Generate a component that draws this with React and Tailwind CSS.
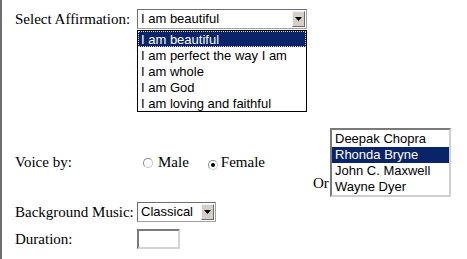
import React from "react";

const affirmations = [
  "I am beautiful",
  "I am perfect the way I am",
  "I am whole",
  "I am God",
  "I am loving and faithful",
];

const voices = ["Deepak Chopra", "Rhonda Bryne", "John C. Maxwell", "Wayne Dyer"];

// classic gray drop button with black arrow
const DropButton = () => (
  <div className="w-[13px] h-[16px] mr-[1px] flex items-center justify-center bg-[#d4d0c8] border border-t-[#f4f4f4] border-l-[#f4f4f4] border-b-[#6b6b6b] border-r-[#6b6b6b]">
    <svg width="7" height="4" viewBox="0 0 7 4">
      <path d="M0 0h7L3.5 4z" fill="#000" />
    </svg>
  </div>
);

const Select = ({ value, className }) => (
  <div
    className={`flex items-center h-[20px] bg-white border border-t-[#6f6f6f] border-l-[#6f6f6f] border-r-[#a0a0a0] border-b-[#a0a0a0] font-['Liberation_Sans',Arial,sans-serif] text-[13px] ${className}`}
  >
    <span className="flex-1 pl-[3px] leading-[16px] whitespace-nowrap">{value}</span>
    <DropButton />
  </div>
);

const Radio = ({ checked }) => (
  <span className="inline-flex items-center justify-center w-[10px] h-[10px] rounded-full border border-t-[#8a8a8a] border-l-[#8a8a8a] border-r-[#c8c8c8] border-b-[#c8c8c8] bg-white">
    {checked && <span className="w-[4px] h-[4px] rounded-full bg-black" />}
  </span>
);

export default function App() {
  return (
    <div className="w-[467px] h-[259px] overflow-hidden bg-white border-l-2 border-[#6e6e6e] pl-[13px] font-['Liberation_Serif','Times_New_Roman',serif] text-[15px] text-black">
      {/* Affirmation */}
      <div className="flex items-center h-[20px] mt-[9px]">
        <span className="w-[122px] whitespace-nowrap">Select Affirmation:</span>
        <div className="relative">
          <Select value="I am beautiful" className="w-[170px]" />
          <ul className="absolute left-0 top-[21px] w-[170px] bg-white border border-black font-['Liberation_Sans',Arial,sans-serif] text-[13px] z-10">
            {affirmations.map((a, i) => (
              <li
                key={a}
                className={`h-[16px] leading-[15px] pl-[2px] whitespace-nowrap ${
                  i === 0
                    ? "bg-[#0a246a] text-white border border-dotted border-[#d8d8b0]"
                    : "border border-transparent"
                }`}
              >
                {a}
              </li>
            ))}
          </ul>
        </div>
      </div>

      {/* Voice */}
      <div className="flex h-[69px] mt-[99px]">
        <span className="w-[122px] self-center whitespace-nowrap">Voice by:</span>
        <div className="w-[176px] self-center flex items-center pl-[6px]">
          <Radio />
          <span className="ml-[5px]">Male</span>
          <span className="ml-[19px]">
            <Radio checked />
          </span>
          <span className="ml-[3px]">Female</span>
        </div>
        <div className="flex items-end">
          <span className="mb-[3px] w-[17px]">Or</span>
          <div className="w-[121px] h-[69px] pt-[1px] bg-white border-2 border-t-[#7a7a7a] border-l-[#7a7a7a] border-r-[#cfcfcf] border-b-[#cfcfcf] font-['Liberation_Sans',Arial,sans-serif] text-[13px]">
            {voices.map((v, i) => (
              <div
                key={v}
                className={`h-[16px] leading-[16px] pl-[3px] whitespace-nowrap ${
                  i === 1 ? "bg-[#0a246a] text-white" : ""
                }`}
              >
                {v}
              </div>
            ))}
          </div>
        </div>
      </div>

      {/* Background music */}
      <div className="flex items-center h-[20px] mt-[5px]">
        <span className="w-[122px] whitespace-nowrap">Background Music:</span>
        <Select value="Classical" className="w-[79px]" />
      </div>

      {/* Duration */}
      <div className="flex items-center h-[20px] mt-[7px]">
        <span className="w-[122px] whitespace-nowrap">Duration:</span>
        <div className="w-[43px] h-[20px] bg-white border-2 border-t-[#7a7a7a] border-l-[#7a7a7a] border-r-[#d4d4d4] border-b-[#d4d4d4]" />
      </div>
    </div>
  );
}
